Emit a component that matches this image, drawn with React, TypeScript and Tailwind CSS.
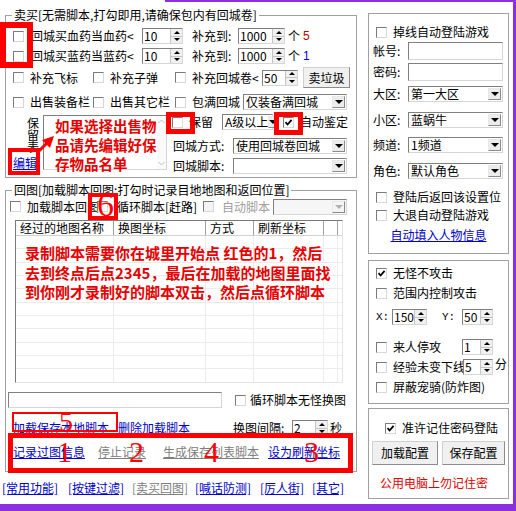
import React from "react";

const SUNK = "border border-[#d6d6d6] border-t-[#808080] border-l-[#808080]";

function Tri({ up = false, gray = false }: { up?: boolean; gray?: boolean }) {
  const cls = up
    ? gray
      ? "border-b-[3px] border-b-[#a8a8a8]"
      : "border-b-[3px] border-b-black"
    : gray
    ? "border-t-[3px] border-t-[#a8a8a8]"
    : "border-t-[3px] border-t-black";
  return <span className={"block w-0 h-0 border-x-[3px] border-x-transparent " + cls} />;
}

function ComboTri({ gray = false }: { gray?: boolean }) {
  return (
    <span
      className={
        "block w-0 h-0 border-x-[4px] border-x-transparent border-t-[4px] " +
        (gray ? "border-t-[#b0b0b0]" : "border-t-black")
      }
    />
  );
}

function Cb({ checked = false, disabled = false, className = "" }: { checked?: boolean; disabled?: boolean; className?: string }) {
  return (
    <span
      className={
        "flex items-center justify-center w-[11px] h-[11px] shrink-0 border border-[#d8d8d8] border-t-[#7a7a7a] border-l-[#7a7a7a] " +
        (disabled ? "bg-[#f4f4f4] " : "bg-white ") +
        className
      }
    >
      {checked && (
        <svg width="9" height="9" viewBox="0 0 9 9">
          <path d="M1.5 4.2 L3.6 6.5 L7.6 1.8" stroke="#000" strokeWidth="1.8" fill="none" />
        </svg>
      )}
    </span>
  );
}

function Chk({
  label,
  checked = false,
  disabled = false,
  className = "",
  gap = "ml-[6px]",
}: {
  label: string;
  checked?: boolean;
  disabled?: boolean;
  className?: string;
  gap?: string;
}) {
  return (
    <div className={"flex items-center shrink-0 " + className}>
      <Cb checked={checked} disabled={disabled} />
      <span className={gap + " whitespace-nowrap " + (disabled ? "text-[#a0a0a0]" : "")}>{label}</span>
    </div>
  );
}

function Spin({ value, className = "" }: { value: string; className?: string }) {
  return (
    <div className={"flex items-center h-[16px] shrink-0 bg-white " + SUNK + " " + className}>
      <span className="flex-1 pl-[1px] leading-[14px] whitespace-nowrap">{value}</span>
      <div className="flex flex-col self-stretch w-[12px] border-l border-[#c4c4c4]">
        <span className="flex-1 flex items-center justify-center bg-[#f0f0f0] border-b border-[#c4c4c4]">
          <Tri up />
        </span>
        <span className="flex-1 flex items-center justify-center bg-[#f0f0f0]">
          <Tri />
        </span>
      </div>
    </div>
  );
}

function Combo({ text = "", className = "", disabled = false }: { text?: string; className?: string; disabled?: boolean }) {
  return (
    <div className={"flex items-center h-[16px] shrink-0 " + SUNK + (disabled ? " bg-[#f6f6f6] " : " bg-white ") + className}>
      <span className="flex-1 pl-[2px] whitespace-nowrap leading-[14px]">{text}</span>
      <span
        className={
          "w-[13px] h-[12px] mr-[1px] flex items-center justify-center border border-[#e8e8e8] border-r-[#8a8a8a] border-b-[#8a8a8a] " +
          (disabled ? "bg-[#f4f4f4]" : "bg-[#ececec]")
        }
      >
        <ComboTri gray={disabled} />
      </span>
    </div>
  );
}

function Btn({ children, className = "" }: { children: React.ReactNode; className?: string }) {
  return (
    <div
      className={
        "flex items-center justify-center shrink-0 bg-[#f0f0f0] border border-[#d0d0d0] border-r-[#8c8c8c] border-b-[#8c8c8c] " +
        className
      }
    >
      {children}
    </div>
  );
}

function Link({ children, className = "", gray = false }: { children: React.ReactNode; className?: string; gray?: boolean }) {
  return (
    <span className={"underline whitespace-nowrap shrink-0 " + (gray ? "text-[#808080] " : "text-[#0000cc] ") + className}>
      {children}
    </span>
  );
}

const colW = ["w-[98px]", "w-[92px]", "w-[48px]", "w-[70px]", "w-[14px]"];
const headers = ["经过的地图名称", "换图坐标", "方式", "刷新坐标", ""];

export default function App() {
  const rows = Array.from({ length: 11 });
  return (
    <div className="relative w-[516px] h-[511px] bg-[#8b2fe0] overflow-hidden text-[12px] leading-[14px] text-black font-['Noto_Sans_CJK_SC','Noto_Sans',sans-serif]">
      <div className="flex w-[513px] h-[504px] bg-white">
        {/* LEFT COLUMN */}
        <div className="ml-[5px] w-[352px] flex flex-col shrink-0">
          <fieldset className="mt-[8px] h-[170px] border border-[#a0a0a0] min-w-0">
            <legend className="ml-[6px] px-[2px] whitespace-nowrap">卖买[无需脚本,打勾即用,请确保包内有回城卷]</legend>
            {/* row 1 */}
            <div className="flex items-center h-[16px] mt-[6px] pl-[7px]">
              <Cb />
              <span className="ml-[7px] w-[111px] whitespace-nowrap">回城买血药当血药&lt;</span>
              <Spin value="10" className="w-[41px]" />
              <span className="ml-[9px] w-[46px] whitespace-nowrap">补充到:</span>
              <Spin value="1000" className="w-[47px]" />
              <span className="ml-[3px]">个</span>
              <span className="ml-[3px] text-[#c00000] font-['Liberation_Sans',sans-serif]">5</span>
            </div>
            {/* row 2 */}
            <div className="flex items-center h-[16px] mt-[4px] pl-[7px]">
              <Cb />
              <span className="ml-[7px] w-[111px] whitespace-nowrap">回城买蓝药当蓝药&lt;</span>
              <Spin value="10" className="w-[41px]" />
              <span className="ml-[9px] w-[46px] whitespace-nowrap">补充到:</span>
              <Spin value="1000" className="w-[47px]" />
              <span className="ml-[3px]">个</span>
              <span className="ml-[3px] text-[#0000c0] font-['Liberation_Sans',sans-serif]">1</span>
            </div>
            {/* row 3 */}
            <div className="flex items-center h-[21px] mt-[3px] pl-[7px]">
              <Chk label="补充飞标" className="w-[80px]" />
              <Chk label="补充子弹" className="w-[82px]" />
              <Chk label="补充回城卷<" className="w-[87px]" />
              <Spin value="50" className="w-[36px]" />
              <Btn className="ml-[5px] w-[47px] h-[21px]">卖垃圾</Btn>
            </div>
            {/* row 4 */}
            <div className="flex items-center h-[16px] mt-[6px] pl-[7px]">
              <Chk label="出售装备栏" className="w-[80px]" />
              <Chk label="出售其它栏" className="w-[82px]" />
              <Chk label="包满回城" className="w-[68px]" />
              <Combo text="仅装备满回城" className="w-[104px]" />
            </div>
            {/* block */}
            <div className="flex mt-[4px] h-[60px]">
              <div className="w-[37px] flex flex-col shrink-0">
                <div className="pl-[21px] pt-[3px] leading-[12px] flex flex-col">
                  <span>保</span>
                  <span>留</span>
                  <span>表</span>
                </div>
                <Link className="ml-[7px] mt-[3px]">编辑</Link>
              </div>
              <div className={"flex w-[124px] h-[55px] mt-[1px] bg-white shrink-0 " + SUNK}>
                <div className="flex-1 pl-[11px] text-[14.5px] leading-[19px] font-bold text-[#e60000] whitespace-nowrap">
                  如果选择出售物
                  <br />
                  品请先编辑好保
                  <br />
                  存物品名单
                </div>
                <div className="w-[10px] flex flex-col justify-between items-center py-[3px] bg-[#fafafa]">
                  <svg width="7" height="5" viewBox="0 0 7 5">
                    <path d="M0.5 4 L3.5 1 L6.5 4" stroke="#c0c0c0" fill="none" />
                  </svg>
                  <svg width="7" height="5" viewBox="0 0 7 5">
                    <path d="M0.5 1 L3.5 4 L6.5 1" stroke="#c0c0c0" fill="none" />
                  </svg>
                </div>
              </div>
              <div className="ml-[3px] flex flex-col w-[178px]">
                <div className="flex items-center h-[16px]">
                  <Cb className="ml-[2px]" />
                  <span className="ml-[6px] w-[24px] whitespace-nowrap">保留</span>
                  <Combo text="A级以上" className="ml-[9px] w-[51px]" />
                  <Cb checked className="ml-[10px]" />
                  <span className="ml-[6px] whitespace-nowrap">自动鉴定</span>
                </div>
                <div className="flex items-center h-[16px] mt-[8px]">
                  <span className="ml-[3px] w-[60px] whitespace-nowrap">回城方式:</span>
                  <Combo text="使用回城卷回城" className="w-[114px]" />
                </div>
                <div className="flex items-center h-[16px] mt-[4px]">
                  <span className="ml-[3px] w-[60px] whitespace-nowrap">回城脚本:</span>
                  <Combo className="w-[114px]" />
                </div>
              </div>
            </div>
          </fieldset>

          <fieldset className="mt-[5px] h-[289px] border border-[#a0a0a0] min-w-0">
            <legend className="ml-[6px] px-[2px] whitespace-nowrap">回图[加载脚本回图:打勾时记录目地地图和返回位置]</legend>
            <div className="flex items-center h-[17px] mt-[1px] pl-[4px]">
              <Chk label="加载脚本回图" className="w-[87px]" />
              <Chk label="循环脚本[赶路]" className="w-[106px]" gap="ml-[9px]" />
              <Chk label="自动脚本" disabled className="w-[70px]" gap="ml-[8px]" />
              <Combo disabled className="w-[74px]" />
            </div>
            {/* list */}
            <div className="ml-[9px] mt-[5px] w-[328px] h-[163px] bg-white border border-[#e4e4e4] border-t-[#7a7a7a] border-l-[#7a7a7a] flex flex-col overflow-hidden">
              <div className="flex h-[15px] shrink-0 border-b border-[#d0d0d0]">
                {headers.map((h, i) => (
                  <div key={i} className={colW[i] + " shrink-0 border-r border-[#a0a0a0] pl-[4px] leading-[14px] whitespace-nowrap"}>
                    {h}
                  </div>
                ))}
              </div>
              <div className="relative flex-1">
                {rows.map((_, r) => (
                  <div key={r} className="flex h-[13.33px] border-b border-[#ececec]">
                    {colW.map((c, i) => (
                      <div key={i} className={c + " shrink-0 border-r border-[#ececec]"} />
                    ))}
                  </div>
                ))}
                <div className="absolute top-[7px] left-[9px] text-[15px] leading-[19.5px] font-bold text-[#e60000] whitespace-nowrap">
                  录制脚本需要你在城里开始点 红色的1，然后
                  <br />
                  去到终点后点2345，最后在加载的地图里面找
                  <br />
                  到你刚才录制好的脚本双击，然后点循环脚本
                </div>
              </div>
            </div>
            <div className="flex items-center mt-[9px] h-[16px]">
              <div className={"ml-[2px] w-[214px] h-[16px] bg-white shrink-0 " + SUNK} />
              <Cb className="ml-[13px]" />
              <span className="ml-[4px] whitespace-nowrap">循环脚本无怪换图</span>
            </div>
            <div className="flex items-center mt-[12px] h-[16px]">
              <Link className="ml-[7px]">加载保存本地脚本</Link>
              <Link className="ml-[9px]">删除加载脚本</Link>
              <span className="ml-[43px] w-[59px] whitespace-nowrap">换图间隔:</span>
              <Spin value="2" className="w-[36px]" />
              <span className="ml-[2px]">秒</span>
            </div>
            <div className="flex items-center mt-[8px] h-[16px]">
              <Link className="ml-[7px]">记录过图信息</Link>
              <Link gray className="ml-[13px]">停止记录</Link>
              <Link gray className="ml-[17px]">生成保存列表脚本</Link>
              <Link className="ml-[9px]">设为刷新坐标</Link>
            </div>
          </fieldset>

          <div className="flex items-center h-[14px] mt-[9px] -ml-[3px]">
            <Link className="w-[66px]">[常用功能]</Link>
            <Link className="w-[64px]">[按键过滤]</Link>
            <Link gray className="w-[63px]">[卖买回图]</Link>
            <Link className="w-[65px]">[喊话防测]</Link>
            <Link className="w-[52px]">[厉人街]</Link>
            <Link>[其它]</Link>
          </div>
        </div>

        {/* RIGHT COLUMN */}
        <div className="ml-[11px] w-[141px] flex flex-col shrink-0">
          <div className="mt-[13px] h-[241px] border border-[#a0a0a0] flex flex-col">
            <Chk label="掉线自动登陆游戏" className="mt-[11px] h-[14px] ml-[7px]" />
            <div className="flex items-center mt-[3px] h-[18px]">
              <span className="ml-[4px] w-[35px]">帐号:</span>
              <div className={"w-[95px] h-[18px] bg-white " + SUNK} />
            </div>
            <div className="flex items-center mt-[3px] h-[18px]">
              <span className="ml-[4px] w-[35px]">密码:</span>
              <div className={"w-[95px] h-[18px] bg-white " + SUNK} />
            </div>
            <div className="flex items-center mt-[5px] h-[16px]">
              <span className="ml-[4px] w-[35px]">大区:</span>
              <Combo text="第一大区" className="w-[95px]" />
            </div>
            <div className="flex items-center mt-[10px] h-[16px]">
              <span className="ml-[4px] w-[35px]">小区:</span>
              <Combo text="蓝蜗牛" className="w-[95px]" />
            </div>
            <div className="flex items-center mt-[9px] h-[16px]">
              <span className="ml-[4px] w-[35px]">频道:</span>
              <Combo text="1频道" className="w-[95px]" />
            </div>
            <div className="flex items-center mt-[10px] h-[16px]">
              <span className="ml-[4px] w-[35px]">角色:</span>
              <Combo text="默认角色" className="w-[95px]" />
            </div>
            <Chk label="登陆后返回该设置位" className="mt-[11px] h-[14px] ml-[7px]" />
            <Chk label="大退自动登陆游戏" className="mt-[4px] h-[14px] ml-[7px]" />
            <div className="mt-[6px] h-[14px] flex justify-center">
              <Link>自动填入人物信息</Link>
            </div>
          </div>

          <div className="mt-[6px] h-[144px] border border-[#a0a0a0] flex flex-col">
            <Chk label="无怪不攻击" checked className="mt-[5px] h-[14px] ml-[7px]" />
            <Chk label="范围内控制攻击" className="mt-[6px] h-[14px] ml-[7px]" />
            <div className="flex items-center mt-[9px] h-[16px]">
              <span className="ml-[7px] w-[16px] font-['Liberation_Mono',monospace] text-[11px]">X:</span>
              <Spin value="150" className="w-[35px]" />
              <span className="ml-[15px] w-[20px] font-['Liberation_Mono',monospace] text-[11px]">Y:</span>
              <Spin value="50" className="w-[31px]" />
            </div>
            <div className="flex items-center mt-[14px] h-[16px]">
              <Chk label="来人停攻" className="ml-[7px] w-[86px]" />
              <Spin value="1" className="w-[31px]" />
            </div>
            <div className="flex items-center mt-[4px] h-[16px]">
              <Chk label="经验未变下线" className="ml-[7px] w-[87px]" />
              <Spin value="5" className="w-[30px]" />
              <span className="ml-[2px] self-start -mt-[2px]">分</span>
            </div>
            <Chk label="屏蔽宠骑(防炸图)" className="mt-[5px] h-[14px] ml-[7px]" />
          </div>

          <div className="mt-[4px] h-[91px] border border-[#a0a0a0] flex flex-col">
            <Chk label="准许记住密码登陆" checked className="mt-[12px] h-[14px] ml-[16px]" />
            <div className="flex mt-[6px]">
              <Btn className="ml-[3px] w-[66px] h-[24px]">加载配置</Btn>
              <Btn className="ml-[4px] w-[63px] h-[24px]">保存配置</Btn>
            </div>
            <div className="mt-[11px] ml-[11px] text-[#e00000] whitespace-nowrap">公用电脑上勿记住密</div>
          </div>
        </div>
      </div>

      {/* purple top strip */}
      <div className="absolute left-[165px] top-0 right-0 h-[2px] bg-[#8b2fe0]" />

      {/* red annotations */}
      <div className="absolute left-0 top-[22px] w-[33px] h-[46px] border-[6px] border-[#ff0000]" />
      <div className="absolute left-[166px] top-[112px] w-[29px] h-[22px] border-[5px] border-[#ff0000]" />
      <div className="absolute left-[274px] top-[112px] w-[29px] h-[23px] border-[5px] border-[#ff0000]" />
      <div className="absolute left-[8px] top-[148px] w-[32px] h-[27px] border-[4px] border-[#ff0000]" />
      <svg className="absolute left-[30px] top-[128px]" width="30" height="30" viewBox="0 0 30 30">
        <line x1="8" y1="24" x2="17" y2="15" stroke="#ff0000" strokeWidth="3" />
        <polygon points="24,8 12,12 20,20" fill="#ff0000" />
      </svg>
      <div className="absolute left-[88px] top-[193px] w-[30px] h-[27px] border-[4px] border-[#ff0000]" />
      <span className="absolute left-[97px] top-[188px] text-[34px] leading-[34px] text-[#ff0000] font-['Liberation_Serif',serif]">6</span>
      <div className="absolute left-[12px] top-[412px] w-[106px] h-[20px] border-[2px] border-[#ff0000]" />
      <span className="absolute left-[59px] top-[408px] text-[28px] leading-[28px] text-[#ff0000] font-['Liberation_Serif',serif]">5</span>
      <div className="absolute left-[8px] top-[433px] w-[345px] h-[40px] border-[5px] border-[#ff0000]" />
      <span className="absolute left-[57px] top-[437px] text-[30px] leading-[30px] text-[#ff0000] font-['Liberation_Serif',serif]">1</span>
      <span className="absolute left-[129px] top-[437px] text-[30px] leading-[30px] text-[#ff0000] font-['Liberation_Serif',serif]">2</span>
      <span className="absolute left-[204px] top-[437px] text-[30px] leading-[30px] text-[#ff0000] font-['Liberation_Serif',serif]">4</span>
      <span className="absolute left-[304px] top-[437px] text-[30px] leading-[30px] text-[#ff0000] font-['Liberation_Serif',serif]">3</span>
    </div>
  );
}
